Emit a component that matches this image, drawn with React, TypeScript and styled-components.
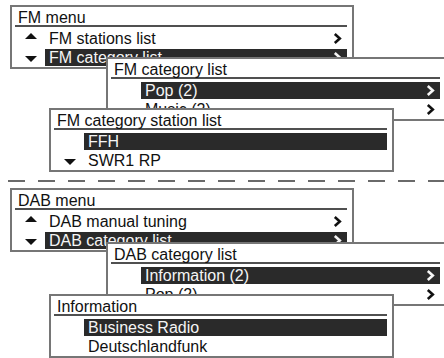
import * as React from "react";
import styled, { createGlobalStyle } from "styled-components";

type Item = { label: string; arrow?: "up" | "down"; chevron?: boolean; selected?: boolean };
type Menu = { title: string; items: Item[] };

const fm = {
  main: {
    title: "FM menu",
    items: [
      { label: "FM stations list", arrow: "up", chevron: true },
      { label: "FM category list", arrow: "down", chevron: true, selected: true },
    ],
  } as Menu,
  sub: {
    title: "FM category list",
    items: [
      { label: "Pop (2)", chevron: true, selected: true },
      { label: "Music (2)", arrow: "down", chevron: true },
    ],
  } as Menu,
  detail: {
    title: "FM category station list",
    items: [
      { label: "FFH", selected: true },
      { label: "SWR1 RP", arrow: "down" },
    ],
  } as Menu,
};

const dab = {
  main: {
    title: "DAB menu",
    items: [
      { label: "DAB manual tuning", arrow: "up", chevron: true },
      { label: "DAB category list", arrow: "down", chevron: true, selected: true },
    ],
  } as Menu,
  sub: {
    title: "DAB category list",
    items: [
      { label: "Information (2)", chevron: true, selected: true },
      { label: "Pop (2)", chevron: true },
    ],
  } as Menu,
  detail: {
    title: "Information",
    items: [
      { label: "Business Radio", selected: true },
      { label: "Deutschlandfunk" },
    ],
  } as Menu,
};

function Triangle({ dir }: { dir: "up" | "down" }) {
  return (
    <ArrowIcon $dir={dir} width="12" height="6" viewBox="0 0 12 6">
      {dir === "up" ? <polygon points="6,0 12,6 0,6" fill="#111" /> : <polygon points="0,0 12,0 6,6" fill="#111" />}
    </ArrowIcon>
  );
}

function Chevron() {
  return (
    <svg width="9" height="11" viewBox="0 0 9 11">
      <polyline points="1.8,1 6.8,5.5 1.8,10" fill="none" stroke="currentColor" strokeWidth="2.6" />
    </svg>
  );
}

function MenuWindow({ menu, width }: { menu: Menu; width: number }) {
  return (
    <Box $width={width}>
      <Title>{menu.title}</Title>
      <Rows>
        {menu.items.map((it) => (
          <Row key={it.label}>
            <ArrowCell>{it.arrow && <Triangle dir={it.arrow} />}</ArrowCell>
            <Bar $selected={!!it.selected}>
              <span>{it.label}</span>
              {it.chevron && <Chevron />}
            </Bar>
          </Row>
        ))}
      </Rows>
    </Box>
  );
}

function MenuSection({
  data,
  top,
  subTop,
  detailTop,
}: {
  data: typeof fm;
  top: number;
  subTop: number;
  detailTop: number;
}) {
  return (
    <Section $top={top}>
      <MainSlot>
        <MenuWindow menu={data.main} width={344} />
      </MainSlot>
      <Overlay $left={106} $top={subTop}>
        <MenuWindow menu={data.sub} width={341} />
      </Overlay>
      <Overlay $left={49} $top={detailTop}>
        <MenuWindow menu={data.detail} width={345} />
      </Overlay>
    </Section>
  );
}

export default function App() {
  return (
    <Page>
      <Global />
      <MenuSection data={fm} top={5} subTop={57} detailTop={108} />
      <Divider />
      <MenuSection data={dab} top={6} subTop={60} detailTop={112} />
    </Page>
  );
}

const Global = createGlobalStyle`
  html, body {
    margin: 0;
    padding: 0;
    background: #fff;
    overflow: hidden;
  }
  * {
    box-sizing: border-box;
  }
`;

const Page = styled.div`
  width: 444px;
  height: 358px;
  overflow: hidden;
  background: #fff;
  font-family: "Liberation Sans", Arial, sans-serif;
  font-size: 16px;
  color: #111;
`;

const Section = styled.div<{ $top: number }>`
  position: relative;
  height: 180px;
  padding-top: ${(p) => p.$top}px;
`;

const MainSlot = styled.div`
  margin-left: 10px;
`;

const Overlay = styled.div<{ $left: number; $top: number }>`
  position: absolute;
  left: ${(p) => p.$left}px;
  top: ${(p) => p.$top}px;
`;

const Divider = styled.div`
  height: 2px;
  margin-left: 8px;
  background: repeating-linear-gradient(to right, #6a6a6a 0 17px, transparent 17px 30px);
`;

const Box = styled.div<{ $width: number }>`
  width: ${(p) => p.$width}px;
  background: #fff;
  border: 2px solid #767676;
  padding: 0 5px 1px 3px;
`;

const Title = styled.div`
  height: 20px;
  padding: 3px 0 0 3px;
  line-height: 15px;
  border-bottom: 2px solid #505050;
  white-space: nowrap;
`;

const Rows = styled.div`
  display: flex;
  flex-direction: column;
  gap: 2px;
  padding-top: 3px;
`;

const Row = styled.div`
  display: grid;
  grid-template-columns: 30px 1fr;
  height: 17px;
`;

const ArrowCell = styled.div`
  display: flex;
  align-items: center;
  justify-content: center;
  padding-left: 2px;
`;

const ArrowIcon = styled.svg<{ $dir: "up" | "down" }>`
  display: block;
  transform: translateY(${(p) => (p.$dir === "up" ? -3 : 1)}px);
`;

const Bar = styled.div<{ $selected: boolean }>`
  display: flex;
  align-items: center;
  justify-content: space-between;
  padding: 0 5px 0 4px;
  line-height: 17px;
  white-space: nowrap;
  background: ${(p) => (p.$selected ? "#2a2a2a" : "transparent")};
  color: ${(p) => (p.$selected ? "#f5f5f5" : "#111")};
`;
